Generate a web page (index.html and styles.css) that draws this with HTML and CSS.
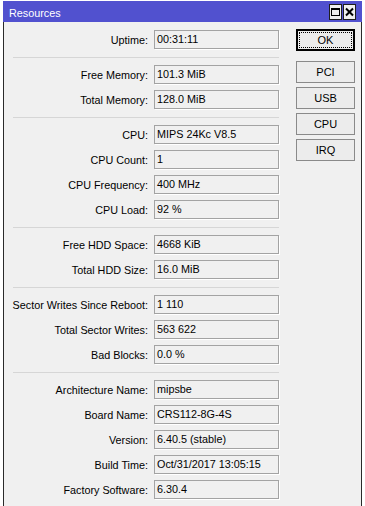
FILE: index.html
```html
<!DOCTYPE html>
<html lang="en">
<head>
  <meta charset="UTF-8">
  <meta name="viewport" content="width=device-width, initial-scale=1.0">
  <title>Resources</title>
  <link rel="stylesheet" href="styles.css">
</head>
<body>
  <div class="window">
    <div class="titlebar">
      <span class="title">Resources</span>
      <div class="controls">
        <span class="ctl">
          <svg width="11" height="14" viewBox="0 0 11 14"><rect x="1.5" y="3.5" width="8" height="7" fill="none" stroke="#000"/><line x1="1" y1="4.5" x2="10" y2="4.5" stroke="#000"/></svg>
        </span>
        <span class="ctl">
          <svg width="11" height="14" viewBox="0 0 11 14"><path d="M2 3.5 L9 10.5 M9 3.5 L2 10.5" stroke="#000" stroke-width="2"/></svg>
        </span>
      </div>
    </div>
    <div class="client">
      <div class="fields">
        <div class="row"><span class="label">Uptime:</span><span class="value">00:31:11</span></div>
        <div class="sep"></div>
        <div class="row"><span class="label">Free Memory:</span><span class="value">101.3 MiB</span></div>
        <div class="row"><span class="label">Total Memory:</span><span class="value">128.0 MiB</span></div>
        <div class="sep"></div>
        <div class="row"><span class="label">CPU:</span><span class="value">MIPS 24Kc V8.5</span></div>
        <div class="row"><span class="label">CPU Count:</span><span class="value">1</span></div>
        <div class="row"><span class="label">CPU Frequency:</span><span class="value">400 MHz</span></div>
        <div class="row"><span class="label">CPU Load:</span><span class="value">92 %</span></div>
        <div class="sep"></div>
        <div class="row"><span class="label">Free HDD Space:</span><span class="value">4668 KiB</span></div>
        <div class="row"><span class="label">Total HDD Size:</span><span class="value">16.0 MiB</span></div>
        <div class="sep"></div>
        <div class="row"><span class="label">Sector Writes Since Reboot:</span><span class="value">1 110</span></div>
        <div class="row"><span class="label">Total Sector Writes:</span><span class="value">563 622</span></div>
        <div class="row"><span class="label">Bad Blocks:</span><span class="value">0.0 %</span></div>
        <div class="sep"></div>
        <div class="row"><span class="label">Architecture Name:</span><span class="value">mipsbe</span></div>
        <div class="row"><span class="label">Board Name:</span><span class="value">CRS112-8G-4S</span></div>
        <div class="row"><span class="label">Version:</span><span class="value">6.40.5 (stable)</span></div>
        <div class="row"><span class="label">Build Time:</span><span class="value">Oct/31/2017 13:05:15</span></div>
        <div class="row"><span class="label">Factory Software:</span><span class="value">6.30.4</span></div>
      </div>
      <div class="buttons">
        <button class="btn default">OK</button>
        <button class="btn">PCI</button>
        <button class="btn">USB</button>
        <button class="btn">CPU</button>
        <button class="btn">IRQ</button>
      </div>
    </div>
  </div>
</body>
</html>
```

FILE: styles.css
```css
body { margin: 0; background: #fff; font-family: "Liberation Sans", Arial, sans-serif; font-size: 10.8px; color: #000; }
.window { margin: 1px 0 0 3px; width: 359px; }
.titlebar { height: 21px; background: #5151cf; color: #fff; display: flex; align-items: center; justify-content: space-between; padding: 0 6px; box-sizing: border-box; }
.title { padding-top: 3px; }
.controls { display: flex; gap: 1px; }
.ctl { width: 13px; height: 16px; box-sizing: border-box; border: 1px solid #1e1e1e; background: #f0f0f0; display: flex; align-items: center; justify-content: center; }
.ctl svg { display: block; }
.client { display: flex; background: #f0f0f0; border-left: 1px solid #2a2a2a; border-right: 1px solid #2a2a2a; padding-top: 8px; min-height: 490px; }
.fields { width: 275px; }
.row { display: flex; align-items: center; gap: 6px; height: 19px; margin-bottom: 6px; }
.label { width: 144px; text-align: right; white-space: nowrap; }
.value { width: 125px; height: 19px; box-sizing: border-box; border: 1px solid #a3a3a3; box-shadow: 1px 1px 0 #fff; padding-left: 2px; line-height: 17px; white-space: nowrap; }
/* row margin collapses into the 8px top margin */
.sep { margin: 8px 0 7px 9px; border-top: 1px solid #d6d6d6; }
.buttons { margin: -1px 0 0 17px; display: flex; flex-direction: column; gap: 4px; }
.btn { width: 59px; height: 22px; box-sizing: border-box; border: 1px solid #8a8a8a; background: #ececec; font: inherit; font-size: 11px; color: #000; padding: 0; }
.btn.default { border: 1px solid #000; box-shadow: inset 0 0 0 1px #000; outline: 1px dotted #000; outline-offset: -4px; margin-bottom: 6px; }
```
